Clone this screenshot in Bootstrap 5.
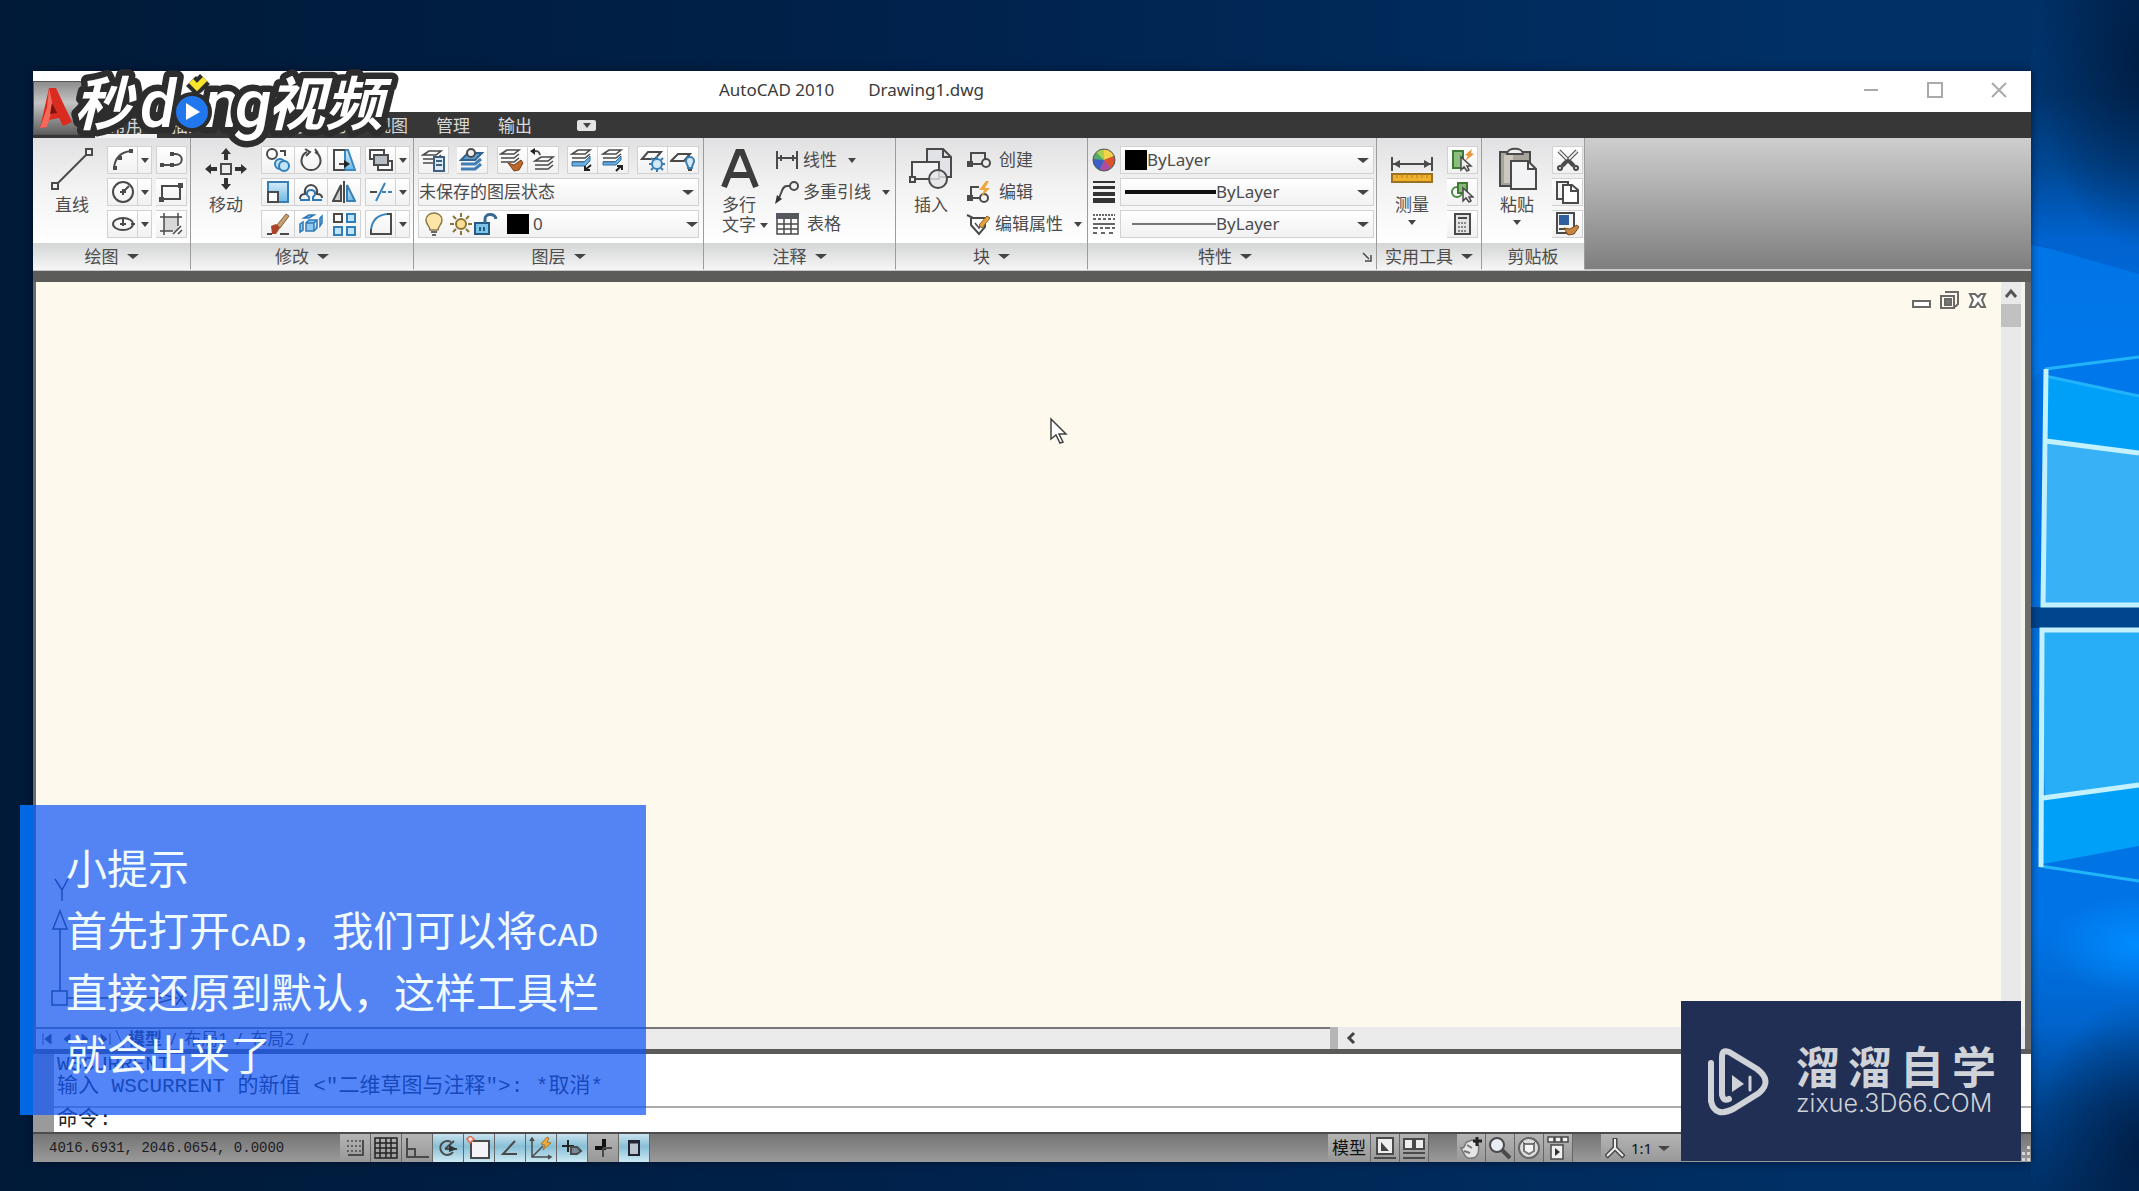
<!DOCTYPE html>
<html lang="zh-CN">
<head>
<meta charset="utf-8">
<meta name="viewport" content="width=device-width, initial-scale=1">
<title>AutoCAD 2010 - Drawing1.dwg</title>
<link rel="stylesheet" href="https://cdn.jsdelivr.net/npm/bootstrap@5.3.0/dist/css/bootstrap.min.css">
<style>
body{font-family:"Noto Sans","Noto Sans CJK SC",sans-serif;font-size:17px;line-height:20px;color:#4c4c4c}
button{color:inherit;padding:0;border:0;background:none}
svg{display:block;flex:none}
svg.ic{fill:none;stroke:#4a4a4a;stroke-width:2}
.desk{height:100vh;padding:71px 108px 29px 33px;overflow:hidden;background:linear-gradient(90deg,#001a38 0,#00214a 40%,#003066 85%)}
.wall{right:0;top:0;width:108px;height:100%}
.win{box-shadow:0 0 8px rgba(0,8,24,.6)}
.titlebar{height:41px;background:#fff;color:#3a3a3a;padding:0 24px 3px 686px}
.titlebar .doc{margin-left:34px}
.wctl{gap:48px}
.menubar{height:26px;background:#373737;padding-left:62px}
.menubar a{color:#d8d8d8;text-decoration:none;padding:0 14px;line-height:28px;height:26px}
.menubar a.active{border-bottom:4px solid #f2f2f2}
.mbx{width:19px;height:11px;border-radius:2px;background:#e4e4e4;margin-left:31px}
.appbtn{left:0;top:10px;width:62px;height:54px;background:linear-gradient(#8d8d8d,#c4c4c4 40%,#5f5f5f);border:1px solid #555;padding:3px 5px}
.brand{left:40px;top:20px}
.ribbon{height:133px;background:linear-gradient(#cecece,#7f7f7f);border-bottom:2px solid #c9c9c9}
.panel{border-right:1px solid #9c9c9c;background:#f2f2f2}
.pbody{height:105px;padding-top:8px;background:linear-gradient(#e1e1e3,#f2f2f2 45%,#fff)}
.ptitle{height:27px;background:linear-gradient(#d4d5d6,#f6f6f6);gap:8px}
.w-draw{width:158px}.w-mod{width:223px}.w-lay{width:290px}.w-ann{width:192px}.w-prop{width:289px}.w-util{width:105px}.w-clip{width:103px}
.big{width:70px;line-height:20px;display:flex;flex-direction:column;align-items:center;justify-content:flex-start}
.big svg.ic{margin:1px 0 4px}
.big .caret{margin-top:5px}
.big .side{right:-12px;top:3px}
.rows{display:flex;flex-direction:column;gap:4px}
.tb{width:31px;height:28px;border:1px solid #d2d2d4;background:linear-gradient(#fff,#f1f1f2);display:flex;align-items:center;justify-content:center}
.tb+.tb,.tb+.dd{border-left:0}
.dd{width:14px;height:28px;border:1px solid #d2d2d4;background:linear-gradient(#fff,#f1f1f2);display:flex;align-items:center;justify-content:center}
.caret{width:0;height:0;border:4px solid transparent;border-top:5px solid #444;border-bottom:0;flex:none}
.caret.lg{border-width:5px 6px 0}
.combo{height:28px;border:1px solid #d2d2d4;background:linear-gradient(#fff,#f1f1f2)}
.combo select{appearance:none;border:0;background:none;color:#4c4c4c;font-size:17px;line-height:20px;padding:0;outline:0}
.swatch{width:22px;height:20px;background:#000}
.combos{width:281px}
.propc{width:254px}
.lw{width:91px;height:4px;background:#111}
.lt{width:84px;height:2px;background:#777;margin-left:7px}
.item{height:28px;gap:3px}
.item .caret{margin-left:8px}
.band{height:11px;background:#5b5b59}
.mid{border-left:3px solid #6b6b69;border-right:6px solid #6b6b69}
.sheet{background:#fdf9ec}
.docctl{right:14px;top:9px;gap:9px}
.docctl svg.ic{stroke:#6a6a68}
.cursor{left:1014px;top:135px}
.ucs{left:12px;top:595px}
.vsb{width:24px;background:#e9e9e9;border-right:4px solid #f4f3ea}
.vsb .thumb{width:20px;height:23px;background:#c1c1c1}
.tabs{height:22px;background:#ebebeb;color:#333}
.tabset{width:1294px;border-top:2px solid #777;background:#ebebeb;font-size:17px}
.split{width:8px;background:#b5b5b5}
.band2{height:5px;background:#5b5b59}
.cmd{height:78px;background:#fff;border-left:21px solid #9a9a9a;font-family:"Liberation Mono","Noto Sans CJK SC",monospace;font-size:21px;line-height:22px;color:#222}
.hist{height:54px;border-bottom:2px solid #aaa;padding-left:3px;overflow:hidden}
.cmdin{height:24px;padding-left:3px}
.cmdin input{border:0;outline:0;background:none;padding:0;height:22px}
.status{height:30px;background:linear-gradient(#757575,#9a9a9a);border-top:2px solid #4c4c4c}
.coords{width:307px;padding-left:16px;font-family:"Liberation Mono",monospace;font-size:14px;color:#1c1c1c}
.sb{width:31px;height:28px;border-right:1px solid #666;background:linear-gradient(#b4b4b4,#989898);display:flex;align-items:center;justify-content:center}
.sb.on{background:linear-gradient(#c8e2ee,#87bfd6 45%,#cdeaf3)}
.sb.wide{width:43px;color:#111}
.sb.r{width:29px}
.g1{width:678px}.g2{width:28px}
.scale{width:90px;height:28px;background:linear-gradient(#b4b4b4,#989898);color:#111;font-size:15px;gap:6px;padding-left:4px}
.tip{left:20px;top:805px;width:626px;height:310px;border-left:13px solid #0068e2;background:rgba(20,88,245,.73);background-clip:padding-box;color:#effbff;padding:30px 0 0 33px;font-size:41px;line-height:62px;font-family:"Noto Sans CJK SC",sans-serif;font-weight:400}
.tip .en{font-family:"Liberation Mono",monospace;font-size:34px;line-height:40px}
.stamp{right:118px;bottom:30px;width:340px;height:160px;background:#222f54;color:#cfd2d6;padding:14px 25px 0 26px}
.stamp .name{font-family:"Noto Sans CJK SC",sans-serif;font-weight:700;font-size:44px;line-height:52px;width:200px}
.stamp .site{font-family:Inter,sans-serif;font-weight:300;font-size:25px;line-height:24px}
</style>
</head>
<body>
<svg width="0" height="0" class="position-absolute">
<defs>
<linearGradient id="bl" x1="0" x2="0" y1="0" y2="1"><stop offset="0" stop-color="#d5ecf8"/><stop offset="1" stop-color="#6db9e6"/></linearGradient>
<linearGradient id="sky" x1="0" x2="0" y1="0" y2="1"><stop offset="0" stop-color="#003066"/><stop offset=".08" stop-color="#00356e"/><stop offset=".14" stop-color="#004894"/><stop offset=".2" stop-color="#0063cf"/><stop offset=".3" stop-color="#0070e0"/><stop offset=".78" stop-color="#0074e6"/><stop offset=".86" stop-color="#0064cc"/><stop offset=".93" stop-color="#00438c"/><stop offset="1" stop-color="#003066"/></linearGradient>
<radialGradient id="dim"><stop offset="0" stop-color="#00183a" stop-opacity=".8"/><stop offset="1" stop-color="#00183a" stop-opacity="0"/></radialGradient>
<radialGradient id="glow"><stop offset="0" stop-color="#008cff"/><stop offset="1" stop-color="#008cff" stop-opacity="0"/></radialGradient>
<g id="sheets"><path d="M3 18h13l5-4M3 14h13l5-4M3 10h13l5-4H9z" stroke-width="1.6"/></g>
</defs>
</svg>

<div class="desk position-relative">
<svg class="wall position-absolute" viewBox="0 0 108 1191" preserveAspectRatio="none">
<rect width="108" height="1191" fill="url(#sky)"/>
<ellipse cx="112" cy="60" rx="108" ry="190" fill="url(#dim)"/>
<ellipse cx="112" cy="1150" rx="112" ry="150" fill="url(#dim)"/>
<ellipse cx="108" cy="945" rx="90" ry="50" fill="url(#glow)"/>
<path d="M0 245L20 249L108 274V356L13 368L0 380z" fill="#007cf0" fill-opacity=".7"/>
<path d="M13 369L108 357V396L19 378z" fill="#0078ec"/>
<path d="M14 376L108 396V607H11z" fill="#00a0f8"/>
<path d="M17 442L108 454V607H11z" fill="#38b1f6"/>
<path d="M14 376L108 396M14 369L108 357" stroke="#22b4fa" stroke-width="3" fill="none"/>
<path d="M0 607H108V628H0z" fill="#00468f"/>
<path d="M10 628H108V846L15 864z" fill="#28adf7"/>
<path d="M12 797L108 785V846L12 864z" fill="#00a0f8"/>
<path d="M12 864L108 846V880z" fill="#0074e4"/>
<path d="M9 866L108 881" stroke="#1fb6fa" stroke-width="3"/>
<path d="M15 369L12 605H108M15 441L108 453M108 630H11L10 867M12 798L108 785" stroke="#c4f1ff" stroke-width="5" fill="none"/>
</svg>

<main class="win position-relative d-flex flex-column h-100">
<header class="titlebar d-flex align-items-center flex-shrink-0">
<span>AutoCAD 2010</span><span class="doc">Drawing1.dwg</span>
<div class="wctl d-flex ms-auto">
<button type="button" aria-label="最小化"><svg width="16" height="16" fill="none" stroke="#aaa" stroke-width="2"><path d="M1 8h14"/></svg></button>
<button type="button" aria-label="最大化"><svg width="16" height="16" fill="none" stroke="#aaa" stroke-width="2"><path d="M1 1h14v14H1z"/></svg></button>
<button type="button" aria-label="关闭"><svg width="16" height="16" fill="none" stroke="#aaa" stroke-width="2"><path d="M1 1l14 14M15 1L1 15"/></svg></button>
</div>
</header>
<nav class="menubar d-flex flex-shrink-0 align-items-center">
<a href="#" class="active">常用</a><a href="#">插入</a><a href="#">注释</a><a href="#">参数化</a><a href="#">视图</a><a href="#">管理</a><a href="#">输出</a>
<button type="button" class="mbx d-flex align-items-center justify-content-center" aria-label="最小化面板"><span class="caret"></span></button>
</nav>
<button type="button" class="appbtn position-absolute" aria-label="应用程序菜单">
<svg width="34" height="44" viewBox="0 0 34 44"><path d="M10 2L17 2L33 36L24 40L20 32L10 34L8 41L1 42z" fill="#d92b20"/><path d="M10 2L8 22L1 42L8 41L14 20z" fill="#f4695b"/><path d="M13 17l5 10-7 1z" fill="#7e120c"/></svg>
</button>

<section class="ribbon d-flex flex-shrink-0">
<div class="panel w-draw">
<div class="pbody d-flex ps-1">
<button type="button" class="big"><svg class="ic" width="44" height="44"><path d="M5 39L39 5"/><path d="M2 36h6v6H2zM36 2h6v6h-6z" fill="#f4f4f4"/></svg>直线</button>
<div class="d-flex gap-1">
<div class="rows">
<div class="d-flex"><button type="button" class="tb" aria-label="圆弧"><svg class="ic" width="24" height="24"><path d="M3 20C4 10 10 4 20 3"/><path d="M2 18h4v4H2zM7 8h4v4H7zM18 1h4v4h-4z" fill="#4a4a4a" stroke="none"/></svg></button><button type="button" class="dd" aria-label="更多"><span class="caret"></span></button></div>
<div class="d-flex"><button type="button" class="tb" aria-label="圆"><svg class="ic" width="24" height="24"><circle cx="12" cy="12" r="10"/><path d="M12 12L18 6M9 12h6M12 9v6"/></svg></button><button type="button" class="dd" aria-label="更多"><span class="caret"></span></button></div>
<div class="d-flex"><button type="button" class="tb" aria-label="椭圆"><svg class="ic" width="24" height="24"><ellipse cx="12" cy="12" rx="10" ry="6"/><path d="M9 12h6M12 6v8M20 12h4"/></svg></button><button type="button" class="dd" aria-label="更多"><span class="caret"></span></button></div>
</div>
<div class="rows">
<button type="button" class="tb" aria-label="多段线"><svg class="ic" width="24" height="24"><path d="M2 17h13c9 0 9-11 0-11h-3"/><path d="M0 15h4v4H0zM10 15h4v4h-4zM10 4h4v4h-4z" fill="#4a4a4a" stroke="none"/></svg></button>
<button type="button" class="tb" aria-label="矩形"><svg class="ic" width="24" height="24"><path d="M3 6h18v13H3z"/><path d="M19 3h5v5h-5zM0 17h5v5H0z" fill="#4a4a4a" stroke="none"/></svg></button>
<button type="button" class="tb" aria-label="图案填充"><svg class="ic" width="24" height="24"><path d="M5 5h14v14H5z" fill="#d8d8d8" stroke="none"/><path d="M1 5h22M5 1v22M19 1v13M1 19h13M14 22l8-8M19 22l4-4" stroke-width="1.500"/></svg></button>
</div>
</div>
</div>
<div class="ptitle d-flex align-items-center justify-content-center">绘图<span class="caret lg"></span></div>
</div>

<div class="panel w-mod">
<div class="pbody d-flex">
<button type="button" class="big"><svg class="ic" width="44" height="44"><path d="M17 17h10v10H17z"/><path d="M22 1l5 6h-3v6h-4V7h-3zM22 43l5-6h-3v-6h-4v6h-3zM1 22l6-5v3h6v4H7v3zM43 22l-6-5v3h-6v4h6v3z" fill="#333" stroke="none"/></svg>移动</button>
<div class="rows me-1">
<div class="d-flex"><button type="button" class="tb px-3" aria-label="复制"><svg class="ic" width="24" height="24"><circle cx="6" cy="6" r="5"/><path d="M14 3h5v5"/><g stroke="#2f7fbd"><circle cx="14" cy="16" r="5" fill="#bfe2f5"/><circle cx="18" cy="18" r="5" fill="#bfe2f5"/></g></svg></button><button type="button" class="tb px-3" aria-label="旋转"><svg class="ic" width="24" height="24"><path d="M8 4a9.500 9.500 0 1 0 8 0"/><path d="M6 1l5 3-4 4M16 1l3 4"/></svg></button><button type="button" class="tb px-3" aria-label="拉伸"><svg class="ic" width="24" height="24"><path d="M13 2L16 2L23 22H13z" fill="url(#bl)" stroke="#3a8ac6"/><path d="M13 2H2v20h11M7 16h9"/><path d="M12 12l6 4-6 4z" fill="#222" stroke="none"/></svg></button></div>
<div class="d-flex"><button type="button" class="tb px-3" aria-label="缩放"><svg class="ic" width="24" height="24"><path d="M2 2h20v20H2z" fill="url(#bl)" stroke="#3a7fb4"/><path d="M2 12h10v10H2z" fill="#fff"/></svg></button><button type="button" class="tb px-3" aria-label="偏移"><svg class="ic" width="24" height="24"><path d="M1 20h9v-3c-3-2-3-7 2-7s5 5 2 7v3h9" stroke="#2f78b8"/><path d="M1 19c0-4 2-5 5-5-2-12 14-12 12 0 3 0 5 1 5 4"/></svg></button><button type="button" class="tb px-3" aria-label="镜像"><svg class="ic" width="24" height="24"><path d="M9 5v16H1z" fill="#ccc"/><path d="M15 5v16h8z" fill="url(#bl)" stroke="#3a7fb4"/><path d="M12 1v22"/></svg></button></div>
<div class="d-flex"><button type="button" class="tb px-3" aria-label="删除"><svg class="ic" width="24" height="24"><path d="M11 13L20 2l3 2-9 12z" fill="#c9a16d" stroke="#7a6040" stroke-width="1"/><path d="M5 14l5-2 4 4-4 6H6z" fill="#a8442a" stroke="none"/><path d="M1 22h5M14 22h9"/></svg></button><button type="button" class="tb px-3" aria-label="分解"><svg class="ic" width="24" height="24"><g fill="#8ecbee" stroke="#2f78b8" stroke-width="1.500"><path d="M7 11h8v8H7zM7 11l3-3h8l-3 3M15 19l3-3V8"/><path d="M1 12l3-2v8l-3 2zM5 6l5-3h5l-5 3zM21 6l2-2v7l-2 3z"/></g></svg></button><button type="button" class="tb px-3" aria-label="阵列"><svg class="ic" width="24" height="24"><path d="M2 2h8v8H2z"/><g fill="#c2e4f7" stroke="#2f7fbd"><path d="M15 2h8v8h-8zM2 15h8v8H2zM15 15h8v8h-8z"/></g></svg></button></div>
</div>
<div class="rows">
<div class="d-flex"><button type="button" class="tb" aria-label="绘图次序"><svg class="ic" width="24" height="24"><path d="M1 2h14v9H1zM9 13h14v9H9z" fill="#fff"/><path d="M5 7h14v10H5z" fill="#b9bec4"/></svg></button><button type="button" class="dd" aria-label="更多"><span class="caret"></span></button></div>
<div class="d-flex"><button type="button" class="tb" aria-label="修剪"><svg class="ic" width="24" height="24"><path d="M1 12h7"/><path d="M7 21L16 3M13 12h4M19 12h4" stroke="#3a84bd"/></svg></button><button type="button" class="dd" aria-label="更多"><span class="caret"></span></button></div>
<div class="d-flex"><button type="button" class="tb" aria-label="圆角"><svg class="ic" width="24" height="24"><path d="M2 18C3 8 9 3 18 2" stroke="#3a84bd"/><path d="M2 17v5h20V2h-4"/></svg></button><button type="button" class="dd" aria-label="更多"><span class="caret"></span></button></div>
</div>
</div>
<div class="ptitle d-flex align-items-center justify-content-center">修改<span class="caret lg"></span></div>
</div>

<div class="panel w-lay">
<div class="pbody ps-1">
<div class="rows combos">
<div class="d-flex justify-content-between">
<button type="button" class="tb" aria-label="图层特性"><svg class="ic" width="26" height="24"><use href="#sheets" transform="translate(-1 -3)"/><path d="M13 9h10v14H13z" fill="#dceaf5" stroke="#3f5f80"/><path d="M15 13h6M15 17h6" stroke="#3f5f80"/></svg></button>
<button type="button" class="tb" aria-label="置为当前"><svg class="ic" width="26" height="24"><path d="M2 21h14l6-5M2 16h14l6-5" stroke-width="3" stroke="#3f7fb5"/><path d="M2 12h14l7-7H9z" fill="#5fa3d6" stroke="#35628c"/><circle cx="12" cy="5" r="4" fill="#eee"/></svg></button>
<div class="d-flex"><button type="button" class="tb" aria-label="匹配"><svg class="ic" width="26" height="24"><use href="#sheets" transform="translate(-1 -4)"/><path d="M9 15l6 2 7-5 2 3-4 7-5 1z" fill="#b9692c" stroke="#7a4218" stroke-width="1"/></svg></button><button type="button" class="tb" aria-label="上一个"><svg class="ic" width="26" height="24"><use href="#sheets" transform="translate(2 3)"/><path d="M10 7C9 3 8 3 4 3"/><path d="M5 0v7L0 3z" fill="#222" stroke="none"/></svg></button></div>
<div class="d-flex"><button type="button" class="tb" aria-label="隔离"><svg class="ic" width="26" height="24"><use href="#sheets" transform="translate(0 -4)"/><path d="M3 14h12l6-6v5l-5 5H3z" fill="#6aaee0" stroke="#2f6da4" stroke-width="1"/><path d="M16 23v-5M15 22h6M16 22l6-5" stroke="#222"/></svg></button><button type="button" class="tb" aria-label="取消隔离"><svg class="ic" width="26" height="24"><use href="#sheets" transform="translate(0 -4)"/><path d="M3 14h12l6-6v4l-5 5H3z" fill="#6aaee0" stroke="#2f6da4" stroke-width="1"/><path d="M22 22v-5M22 18h-5M21 18l-5 5" stroke="#222"/></svg></button></div>
<div class="d-flex"><button type="button" class="tb" aria-label="冻结"><svg class="ic" width="26" height="24"><path d="M2 11L8 4h13l-6 7z"/><circle cx="17" cy="16" r="5" fill="#d2e9f8" stroke="#3a7fb4"/><path d="M17 8v3M17 21v3M9 16h3M22 16h3M11 10l2 2M23 22l-2-2M11 22l2-2M23 10l-2 2" stroke="#3a7fb4"/></svg></button><button type="button" class="tb" aria-label="关闭图层"><svg class="ic" width="26" height="24"><path d="M1 13L8 6h12l-6 7z"/><path d="M18 20c0-4-2-4-2-7a4 4 0 0 1 8 0c0 3-2 3-2 7z" fill="#d2e9f8" stroke="#3a7fb4"/><path d="M18 22h4"/></svg></button></div>
</div>
<div class="combo d-flex align-items-center pe-1">
<select class="flex-grow-1" aria-label="图层状态"><option>未保存的图层状态</option></select><span class="caret lg"></span>
</div>
<div class="combo d-flex align-items-center ps-1">
<svg class="ic" width="22" height="24"><path d="M6 17c0-4-4-5-4-10a8 7 0 0 1 16 0c0 5-4 6-4 10z" transform="translate(1 1)" fill="#fbe6a8" stroke="#8a7a4a" stroke-width="1.500"/><path d="M8 20h6M9 23h4" stroke="#666"/></svg>
<svg class="ic ms-1" width="24" height="24"><circle cx="12" cy="12" r="5" fill="#fbdf94" stroke="#8a7438"/><path d="M12 1v4M12 19v4M1 12h4M19 12h4M4 4l3 3M17 17l3 3M4 20l3-3M17 7l3-3" stroke="#8a7438"/></svg>
<svg class="ic" width="26" height="24"><path d="M2 11h14v11H2z" fill="#7cc3e8" stroke="#245a84"/><path d="M12 11V7c0-6 10-6 11 0" stroke="#356a92" stroke-width="3"/><path d="M7 15v4M11 15v4" stroke="#245a84"/></svg>
<span class="swatch ms-2 me-1"></span>
<select class="flex-grow-1" aria-label="图层"><option>0</option></select><span class="caret lg"></span>
</div>
</div>
</div>
<div class="ptitle d-flex align-items-center justify-content-center">图层<span class="caret lg"></span></div>
</div>

<div class="panel w-ann">
<div class="pbody d-flex">
<button type="button" class="big"><svg class="ic" width="44" height="44"><path d="M7 40L21 5h4l14 35M13 28h20" stroke="#3c3c3c" stroke-width="6"/></svg>多行<span class="position-relative">文字<span class="caret side position-absolute"></span></span></button>
<div class="rows">
<button type="button" class="item d-flex align-items-center"><svg class="ic" width="26" height="24"><path d="M3 3v18M23 3v18M3 10h20M7 7v6M19 7v6"/></svg>线性<span class="caret"></span></button>
<button type="button" class="item d-flex align-items-center"><svg class="ic" width="26" height="24"><circle cx="20" cy="6" r="4"/><path d="M16 6h-3c-6 0-5 9-9 13"/><path d="M1 24l2-9 5 4z" fill="#333" stroke="none"/></svg>多重引线<span class="caret"></span></button>
<button type="button" class="item d-flex align-items-center"><svg class="ic" width="26" height="24"><path d="M3 2h21v20H3zM3 12h21M3 17h21M10 7v15M17 7v15" stroke-width="1.500"/><path d="M2 1h23v6H2z" fill="#55585e" stroke="none"/></svg><span class="ms-1">表格</span></button>
</div>
</div>
<div class="ptitle d-flex align-items-center justify-content-center">注释<span class="caret lg"></span></div>
</div>

<div class="panel w-ann">
<div class="pbody d-flex">
<button type="button" class="big"><svg class="ic" width="44" height="44"><path d="M18 2h16l8 8v20H18z" fill="#e2e3e6"/><path d="M34 2v8h8"/><path d="M3 15h27v17H3z" fill="#f1f1f3"/><path d="M1 30h5v5H1z" fill="#eee"/><circle cx="29" cy="32" r="9" fill="#e6e6e8" fill-opacity=".8"/></svg>插入</button>
<div class="rows">
<button type="button" class="item d-flex align-items-center"><svg class="ic me-1" width="26" height="24"><path d="M5 16V5h14v11z"/><circle cx="20" cy="15" r="4" fill="#eee"/><path d="M2 14h4v4H2z" fill="#4a4a4a"/></svg>创建</button>
<button type="button" class="item d-flex align-items-center"><svg class="ic me-1" width="26" height="24"><path d="M13 7H5v11h10"/><circle cx="18" cy="18" r="4"/><path d="M2 16h4v4H2z" fill="#4a4a4a"/><path d="M20 1l-7 9h5l-3 7 9-9h-5l4-7z" fill="#f0a63a" stroke="none"/></svg>编辑</button>
<button type="button" class="item d-flex align-items-center"><svg class="ic" width="26" height="24"><path d="M1 3l6 3h12v9l-6 7-8-9V6"/><path d="M9 11l4 5 8-11" stroke-width="1.500"/><path d="M13 13l8-9 3 2-8 10z" fill="#e9a23c" stroke="#8d6524" stroke-width="1"/></svg>编辑属性<span class="caret"></span></button>
</div>
</div>
<div class="ptitle d-flex align-items-center justify-content-center">块<span class="caret lg"></span></div>
</div>

<div class="panel w-prop">
<div class="pbody ps-1">
<div class="rows">
<div class="d-flex align-items-center gap-1">
<svg width="24" height="24"><circle cx="12" cy="12" r="11" fill="#5a6"/><path d="M12 12L12 1A11 11 0 0 1 22 8z" fill="#f2d34a"/><path d="M12 12L22 8A11 11 0 0 1 19 20z" fill="#e0502d"/><path d="M12 12L19 20A11 11 0 0 1 8 22z" fill="#b04aa0"/><path d="M12 12L8 22A11 11 0 0 1 1 11z" fill="#3b5fc4"/><path d="M12 12L4 4A11 11 0 0 1 12 1z" fill="#a9cf53"/><circle cx="12" cy="12" r="11" fill="none" stroke="#555"/></svg>
<div class="combo propc d-flex align-items-center px-1"><span class="swatch"></span><select class="flex-grow-1" aria-label="颜色"><option>ByLayer</option></select><span class="caret lg"></span></div>
</div>
<div class="d-flex align-items-center gap-1">
<svg width="24" height="24"><path d="M1 1h22v2H1zM1 6h22v3H1zM1 12h22v4H1zM1 18h22v5H1z" fill="#333"/></svg>
<div class="combo propc d-flex align-items-center px-1"><span class="lw"></span><select class="flex-grow-1" aria-label="线宽"><option>ByLayer</option></select><span class="caret lg"></span></div>
</div>
<div class="d-flex align-items-center gap-1">
<svg width="24" height="24" stroke="#666" stroke-width="2"><path d="M1 3h22" stroke-dasharray="2 1"/><path d="M1 7h22" stroke-dasharray="3 2"/><path d="M1 12h22"/><path d="M1 16h22" stroke-dasharray="5 2 3 2"/><path d="M1 21h22" stroke-dasharray="4 4"/></svg>
<div class="combo propc d-flex align-items-center px-1"><span class="lt"></span><select class="flex-grow-1" aria-label="线型"><option>ByLayer</option></select><span class="caret lg"></span></div>
</div>
</div>
</div>
<div class="ptitle d-flex align-items-center pe-1"><span class="ms-auto ps-2">特性</span><span class="caret lg"></span><svg class="ic ms-auto" width="10" height="10"><path d="M1 1l6 6M9 3v6H3" stroke-width="1.500"/></svg></div>
</div>

<div class="panel w-util">
<div class="pbody d-flex">
<button type="button" class="big"><svg class="ic" width="44" height="44"><path d="M2 10v14M42 10v14M3 17h38"/><path d="M3 17l7-4v8zM41 17l-7-4v8z" fill="#4a4a4a" stroke="none"/><path d="M2 27h40v8H2z" fill="#f0b02c" stroke="#9a7222"/><path d="M7 27v4M12 27v4M17 27v4M22 27v4M27 27v4M32 27v4M37 27v4" stroke="#b5851f" stroke-width="1"/></svg>测量<span class="caret"></span></button>
<div class="rows">
<button type="button" class="tb" aria-label="快速选择"><svg class="ic" width="24" height="24"><path d="M2 3h10v17H2z" fill="#8cbd7c" stroke="#3f7a35"/><path d="M21 1l-7 6 3 1-3 5 9-7-3-1z" fill="#e8963a" stroke="none"/><path d="M10 9v13l3-3 3 4 2-1-2-4h4z" fill="#eee" stroke-width="1.500"/></svg></button>
<button type="button" class="tb" aria-label="全部选择"><svg class="ic" width="24" height="24"><circle cx="7" cy="12" r="5" stroke="#4d8a45"/><path d="M8 3h9v10H8z" fill="#86b878" stroke="#3f7a35"/><path d="M13 8v13l3-3 3 4 2-1-2-4h4z" fill="#eee" stroke-width="1.500"/></svg></button>
<button type="button" class="tb" aria-label="计算器"><svg class="ic" width="24" height="24"><path d="M5 2h15v20H5z" fill="#e4e4e4"/><path d="M8 6h9"/><path d="M8 11h9M8 15h9M8 19h9" stroke-dasharray="2 1" stroke="#888"/></svg></button>
</div>
</div>
<div class="ptitle d-flex align-items-center justify-content-center">实用工具<span class="caret lg"></span></div>
</div>

<div class="panel w-clip">
<div class="pbody d-flex">
<button type="button" class="big"><svg class="ic" width="44" height="44"><path d="M5 5h30v34H5z" fill="#a8a49c"/><path d="M9 8h9v28H9z" fill="#cdc8bf" stroke="none"/><path d="M12 7c0-7 16-7 16 0z" fill="#eee"/><path d="M16 14h17l8 8v20H16z" fill="#f3f3f6"/><path d="M33 14v8h8"/></svg>粘贴<span class="caret"></span></button>
<div class="rows">
<button type="button" class="tb" aria-label="剪切"><svg class="ic" width="24" height="24"><path d="M3 3l15 15M21 3L6 18" stroke-width="4"/><path d="M3 3l8 8M21 3l-8 8" stroke="#eee"/><circle cx="4" cy="20" r="2" fill="#eee"/><circle cx="20" cy="20" r="2" fill="#eee"/></svg></button>
<button type="button" class="tb" aria-label="复制"><svg class="ic" width="24" height="24"><path d="M2 2h11v17H2z" fill="#f5f5f5"/><path d="M8 5h9l6 5v13H8z" fill="#fff"/><path d="M16 5v6h6"/></svg></button>
<button type="button" class="tb" aria-label="特性匹配"><svg class="ic" width="24" height="24"><path d="M2 1h17v20H2z" fill="#f4f4f4"/><path d="M4 3h10v10H4z" fill="#2f5f9f" stroke="none"/><path d="M4 17h6"/><path d="M9 16l6 1 7-4 2 2-5 7-6 1z" fill="#c98743" stroke="#7a4a18" stroke-width="1"/></svg></button>
</div>
</div>
<div class="ptitle d-flex align-items-center justify-content-center">剪贴板</div>
</div>
</section>
<div class="band flex-shrink-0"></div>

<section class="mid d-flex flex-column flex-grow-1">
<div class="d-flex flex-grow-1">
<div class="sheet position-relative flex-grow-1">
<div class="docctl position-absolute d-flex">
<button type="button" aria-label="最小化图形"><svg class="ic" width="19" height="18"><path d="M1 10h17v6H1z" fill="#fff"/></svg></button>
<button type="button" aria-label="还原图形"><svg class="ic" width="19" height="18"><path d="M5 1h13v12l-3 3M1 5h13v12H1z"/><path d="M5 8h6v6H5z" fill="#777"/></svg></button>
<button type="button" aria-label="关闭图形"><svg class="ic" width="19" height="18"><path d="M2 3h5l3 3 3-3h4l-3 6 3 7h-4l-3-4-3 4H2l3-7z" fill="#fff" stroke-width="2"/></svg></button>
</div>
<svg class="cursor position-absolute" width="18" height="28" viewBox="0 0 18 28"><path d="M1 2v20l5-4 4 8 3-1-4-8h7z" fill="#fff" stroke="#444" stroke-width="1.500"/></svg>
<svg class="ucs position-absolute" width="140" height="140" fill="none" stroke="#333" stroke-width="1.500"><path d="M7 2l7 11 6-11M14 13v11M12 52v62M5 52l7-18 7 18zM4 114h15v14H4zM19 121h95M110 116v10l18-5zM128 114l10 14M138 114l-10 14"/></svg>
</div>
<div class="vsb d-flex flex-column">
<svg width="20" height="22" fill="none" stroke="#555" stroke-width="3"><path d="M5 15l5-6 5 6"/></svg>
<div class="thumb"></div>
</div>
</div>
<div class="tabs d-flex flex-shrink-0">
<div class="tabset d-flex align-items-center">
<svg width="92" height="20" fill="#333" stroke="#444"><path d="M7 4v12M15 5l-6 5 6 5zM34 5l-6 5 6 5zM46 5l6 5-6 5zM65 5l6 5-6 5zM74 4v12M80 1l8 18"/></svg><b>模型</b><span class="mx-2">/</span><span>布局1</span><span class="mx-2">/</span><span>布局2</span><span class="mx-2">/</span>
</div>
<div class="split"></div>
<svg width="26" height="22" fill="none" stroke="#444" stroke-width="3"><path d="M16 6l-5 5 5 5"/></svg>
</div>
</section>
<div class="band2 flex-shrink-0"></div>
<section class="cmd flex-shrink-0">
<div class="hist">WSCURRENT<br>输入 WSCURRENT 的新值 &lt;"二维草图与注释"&gt;: *取消*</div>
<div class="cmdin d-flex align-items-center"><label for="cmdline">命令:</label><input id="cmdline" type="text" class="flex-grow-1"></div>
</section>
<footer class="status d-flex flex-shrink-0 align-items-center">
<div class="coords">4016.6931, 2046.0654, 0.0000</div>
<button type="button" class="sb" aria-label="捕捉"><svg class="ic" width="24" height="22"><path d="M4 4h14M4 9h14M4 14h14" stroke-dasharray="2 2" stroke-width="1.500"/><path d="M20 3v15H5"/></svg></button>
<button type="button" class="sb" aria-label="栅格"><svg class="ic" width="24" height="22"><path d="M1 1h22v20H1zM1 6h22M1 11h22M1 16h22M6 1v20M12 1v20M17 1v20" stroke-width="1.500" stroke="#222"/></svg></button>
<button type="button" class="sb" aria-label="正交"><svg class="ic" width="24" height="22"><path d="M2 1v19h22M3 12h7v8"/></svg></button>
<button type="button" class="sb on" aria-label="极轴"><svg class="ic" width="24" height="22"><path d="M15 5a7 7 0 1 0 2 10M9 12L18 4M9 12h12"/><path d="M13 8l8 4-8 3z" fill="#333" stroke="none"/></svg></button>
<button type="button" class="sb on" aria-label="对象捕捉"><svg class="ic" width="26" height="24"><path d="M5 5h18v17H5z" fill="#f4f4f8"/><path d="M1 3l3-3 4 3-4 4z" fill="#fde" stroke="#d8724a" stroke-width="1.500"/></svg></button>
<button type="button" class="sb on" aria-label="对象追踪"><svg class="ic" width="24" height="22"><path d="M17 4L5 17h14"/></svg></button>
<button type="button" class="sb on" aria-label="动态坐标"><svg class="ic" width="24" height="24"><path d="M3 2v19h19M3 21L14 10M1 5l2-3 2 3M19 19l3 2-3 2" stroke-width="1.500"/><path d="M18 1l-6 7 4 1-2 5 8-7-4-1 2-4z" fill="#efaa3a" stroke="#a8762a" stroke-width="1"/></svg></button>
<button type="button" class="sb on" aria-label="动态输入"><svg class="ic" width="24" height="22"><path d="M2 9h12M8 3v12" stroke="#222"/><path d="M11 10h6l4 4-4 3h-6z" fill="#789"/></svg></button>
<button type="button" class="sb" aria-label="线宽显示"><svg class="ic" width="24" height="22"><path d="M4 11h9V2" stroke="#111" stroke-width="4"/><path d="M12 11h9M12 11v9"/></svg></button>
<button type="button" class="sb on" aria-label="快捷特性"><svg class="ic" width="24" height="22"><path d="M7 4h10v14H7z" fill="#b9c4d0" stroke="#223"/><path d="M7 5h10" stroke="#223" stroke-width="3"/></svg></button>
<div class="g1"></div>
<button type="button" class="sb wide">模型</button>
<button type="button" class="sb r" aria-label="布局"><svg class="ic" width="24" height="24"><path d="M4 2h16v16H4z" fill="#eee"/><path d="M8 6v9h8z" fill="#444" stroke="none"/><path d="M1 22h22"/></svg></button>
<button type="button" class="sb r" aria-label="快速查看"><svg class="ic" width="24" height="24"><path d="M2 3h9v10H2zM13 3h9v10h-9z" fill="#eee"/><path d="M1 17h22M1 22h22"/></svg></button>
<div class="g2"></div>
<button type="button" class="sb r" aria-label="平移"><svg class="ic" width="24" height="24"><path d="M2 12c5 1 3-5 6-6l5-2 6 4c2 8-1 14-6 14-6 1-7-2-11-10z" fill="#e6e6e6" stroke="#777" stroke-width="1.500"/><path d="M5 15l6 2M8 9l5 3" stroke="#777"/><path d="M18 1v9M14 5h9" stroke="#222" stroke-width="3"/></svg></button>
<button type="button" class="sb r" aria-label="缩放"><svg class="ic" width="24" height="24"><path d="M14 14l8 8" stroke-width="4"/><circle cx="9" cy="9" r="7" fill="#e8eef4"/></svg></button>
<button type="button" class="sb r" aria-label="控制盘"><svg class="ic" width="24" height="24"><circle cx="12" cy="12" r="10" fill="#ddd" stroke="#666"/><path d="M7 8h10v7l-5 3-5-3z" fill="#f6f6f6" stroke="#777"/><path d="M5 5l3 3M19 5l-3 3" stroke-width="1"/></svg></button>
<button type="button" class="sb r" aria-label="运动"><svg class="ic" width="24" height="24"><path d="M2 1h6v5H2zM9 1h6v5H9zM16 1h6v5h-6zM5 9h12v14H5z" fill="#f0f0f0" stroke-width="1.500"/><path d="M9 12l5 4-5 4z" fill="#333" stroke="none"/></svg></button>
<div class="g2"></div>
<button type="button" class="scale d-flex align-items-center"><svg class="ic" width="20" height="24"><path d="M10 2v10L1 21M10 12l9 9" stroke-width="5"/><path d="M10 3v9L2 20M10 12l8 8" stroke="#eee"/></svg>1:1<span class="caret lg"></span></button>
<svg class="ms-auto" width="10" height="28" fill="#d8d8d8"><path d="M6 12h3v3H6zM1 18h3v3H1zM6 18h3v3H6zM1 24h3v3H1zM6 24h3v3H6z"/></svg>
</footer>
</main>

<svg class="brand position-absolute" width="380" height="160" viewBox="0 0 380 160" role="img" aria-label="秒dong视频">
<g font-family="'Noto Sans CJK SC',sans-serif" font-weight="700" fill="#fff" stroke="#2d2d2d" stroke-width="13" stroke-linejoin="round" paint-order="stroke" font-size="58">
<text x="34" y="105" font-style="italic">秒</text>
<text x="227" y="105" font-style="italic">视频</text>
<g font-family="Roboto,sans-serif" font-style="italic" font-size="66" font-weight="500"><text x="100" y="107">d</text><text x="164" y="107">n</text><text x="195" y="107">g</text></g>
</g>
<circle cx="152" cy="92" r="20" fill="#2d2d2d"/><circle cx="152" cy="92" r="16" fill="#2178ee"/><path d="M146 83l14 9-14 8z" fill="#fff"/>
<path d="M151 61l6 6 8-8" fill="none" stroke="#2d2d2d" stroke-width="14" stroke-linejoin="round"/><path d="M151 61l6 6 8-8" fill="none" stroke="#f9e52b" stroke-width="6"/>
</svg>

<aside class="tip position-absolute">小提示<br>首先打开<span class="en">CAD</span>，我们可以将<span class="en">CAD</span><br>直接还原到默认，这样工具栏<br>就会出来了</aside>

<aside class="stamp position-absolute d-flex justify-content-between">
<svg class="mt-4" width="66" height="80" viewBox="0 0 66 80" fill="none" stroke="#cfd2d6" stroke-width="6" stroke-linecap="round"><path d="M15 55V18Q15 10 22 13L50 30Q66 42 52 54L28 69Q8 80 4 62V24"/><path d="M15 55Q16 63 22 60"/><path d="M25 36v17l12-8z" fill="#cfd2d6" stroke="none"/><path d="M43 38v13" stroke-width="3"/></svg>
<div class="mt-3 pt-2">
<div class="name d-flex justify-content-between"><span>溜</span><span>溜</span><span>自</span><span>学</span></div>
<div class="site">zixue.3D66.COM</div>
</div>
</aside>
</div>
<script src="https://cdn.jsdelivr.net/npm/bootstrap@5.3.0/dist/js/bootstrap.bundle.min.js"></script>
</body>
</html>
